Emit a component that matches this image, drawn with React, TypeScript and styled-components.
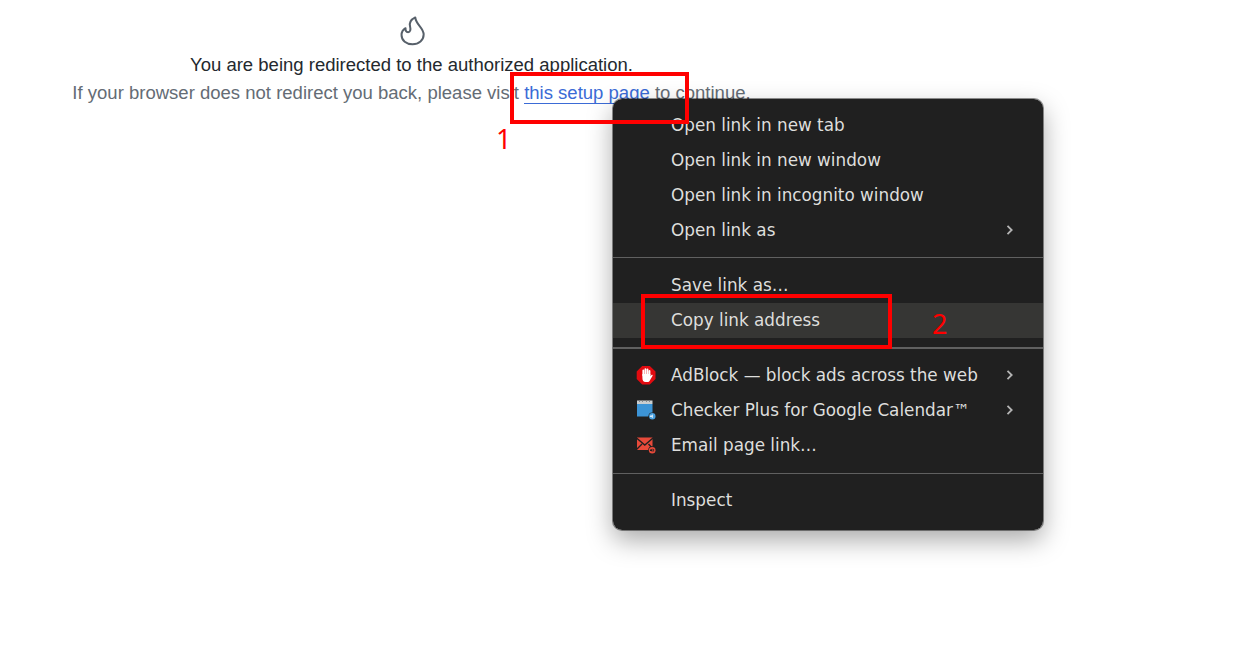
import React from "react";
import styled, { createGlobalStyle } from "styled-components";

const GlobalStyle = createGlobalStyle`
  * { box-sizing: border-box; }
  body { margin: 0; background: #fff; font-family: "Liberation Sans", Arial, sans-serif; overflow: hidden; }
`;

const Page = styled.main`
  position: relative;
  width: 1252px;
  height: 647px;
  overflow: hidden;
`;

const Notice = styled.section`
  width: 823px;
  padding-top: 15px;
  display: flex;
  flex-direction: column;
  align-items: center;
  font-size: 18.53px;
  line-height: 28px;
  white-space: nowrap;
`;

const Flame = styled.svg`
  width: 32px;
  height: 32px;
  margin: 0 0 4px 2px;
`;

const Message = styled.div<{ $muted?: boolean }>`
  color: ${(p) => (p.$muted ? "#646c75" : "#24292e")};
`;

const SetupLink = styled.a`
  color: #3b6bd6;
  text-decoration: none;
  border-bottom: 1px solid #3b6bd6;
`;

const Menu = styled.ul`
  position: absolute;
  left: 613px;
  top: 99px;
  width: 430px;
  height: 431px;
  margin: 0;
  padding: 9px 0 0;
  list-style: none;
  background: #202020;
  border-radius: 9px;
  overflow: hidden;
  font-family: "DejaVu Sans", sans-serif;
  font-size: 16.82px;
  color: #dededc;
`;

const MenuShadow = styled.div`
  position: absolute;
  left: 613px;
  top: 99px;
  width: 430px;
  height: 431px;
  border-radius: 9px;
  box-shadow: 0 0 0 1px rgba(0, 0, 0, 0.42), 0 10px 26px rgba(0, 0, 0, 0.34);
`;

const Item = styled.li<{ $active?: boolean }>`
  height: 35px;
  display: grid;
  grid-template-columns: 34px 1fr 37px;
  align-items: center;
  padding-left: 24px;
  white-space: nowrap;
  background: ${(p) => (p.$active ? "#363634" : "transparent")};
`;

const Label = styled.span`
  grid-column: 2;
  line-height: 20px;
  padding-bottom: 1px;
`;

const Separator = styled.li<{ $thick?: boolean; $drop?: number }>`
  height: 20px;
  padding-top: ${(p) => p.$drop ?? 9}px;
  &::before {
    content: "";
    display: block;
    height: ${(p) => (p.$thick ? 2 : 1)}px;
    background: #606060;
  }
`;

const Glyph = styled.svg`
  width: 20px;
  height: 20px;
  display: block;
  margin: 0 0 1px -1px;
`;

const Chevron = styled.svg`
  width: 8px;
  height: 12px;
  margin-bottom: 2px;
  fill: none;
  stroke: #b4b4b4;
  stroke-width: 1.8;
`;

const Outline = styled.div<{ $x: number; $y: number; $w: number; $h: number }>`
  position: absolute;
  left: ${(p) => p.$x}px;
  top: ${(p) => p.$y}px;
  width: ${(p) => p.$w}px;
  height: ${(p) => p.$h}px;
  border: 4px solid #f00;
`;

const Step = styled.span<{ $x: number; $y: number }>`
  position: absolute;
  left: ${(p) => p.$x}px;
  top: ${(p) => p.$y}px;
  color: #f00;
  font: 27px/32px "Noto Sans", sans-serif;
`;

const StopHand = () => (
  <Glyph viewBox="0 0 20 20">
    <path fill="#e20b10" d="M6.200 1h7.600l5.700 5.500v7.500l-5.700 5.500H6.200L.7 14V6.500z" />
    <path
      d="M7.300 10.500V5.500M9.400 9V4.100M11.500 9V4.300M13.500 10V6"
      stroke="#fff"
      strokeWidth="1.800"
      strokeLinecap="round"
    />
    <path fill="#fff" d="M6.400 9h8v2.200l1.100-1.200c.6-.5 1.400 0 1.100.7l-2.500 4.200c-.7 1.500-1.500 2.200-3.100 2.200H9.600C7.400 17.100 6.400 15.500 6.400 13z" />
  </Glyph>
);

const CalendarIcon = () => (
  <Glyph viewBox="0 0 20 20">
    <path fill="#3c94d6" d="M1 4h15.500v12.500H1z" />
    <path fill="#c9cdcf" d="M1 .5h15.500V4H1z" />
    <path stroke="#888" d="M3.500.5V2M6.500.5V2M10.500.5V2M13.500.5V2" />
    <circle cx="16.300" cy="16.300" r="3.900" fill="#202020" />
    <circle cx="16.300" cy="16.300" r="3.200" fill="#4aa0df" />
    <path fill="#d8ecfa" d="M14 15.500h1.400l1.500-1.200v4l-1.500-1.200H14z" />
  </Glyph>
);

const MailIcon = () => (
  <Glyph viewBox="0 0 20 20">
    <path fill="#e84a3a" d="M1 2.500h15.500v12.500H1z" />
    <path
      fill="none"
      stroke="#202020"
      strokeWidth="1.400"
      d="M.5 3 8.800 10l8.200-7M.5 14.500l5.500-5.500M17 14l-4.500-5"
    />
    <circle cx="16.200" cy="15.200" r="4" fill="#202020" />
    <circle cx="16.200" cy="15.200" r="3.300" fill="#e84a3a" />
    <path fill="#202020" d="M14 14.500h1.200l1.200-1v3.600l-1.200-1H14zM17.300 14h.8v2.500h-.8z" />
  </Glyph>
);

interface EntryProps {
  label: string;
  icon?: React.ReactNode;
  submenu?: boolean;
  active?: boolean;
}

const Entry = ({ label, icon, submenu, active }: EntryProps) => (
  <Item $active={active}>
    {icon}
    <Label>{label}</Label>
    {submenu && (
      <Chevron viewBox="0 0 8 12">
        <path d="M1.500 1.800 5.700 6 1.500 10.200" />
      </Chevron>
    )}
  </Item>
);

export default function App() {
  return (
    <Page>
      <GlobalStyle />
      <Notice>
        <Flame viewBox="0 0 24 24">
          <path
            fill="none"
            stroke="#57606a"
            strokeWidth="1.500"
            strokeLinejoin="round"
            d="M13.700 1.800c-3 1.500-4.600 4-3.900 6.800.6 2.300.2 4.300-1.500 4.300-1.600 0-2-1.300-1.900-3-2 1.200-3 3.200-3 5.100 0 4.200 3.600 7 8.300 7s8.300-3.100 8.300-7.300c0-5.300-5.800-7.200-6.300-12.900z"
          />
        </Flame>
        <Message>You are being redirected to the authorized application.</Message>
        <Message $muted>
          If your browser does not redirect you back, please visit <SetupLink>this setup page</SetupLink> to continue.
        </Message>
      </Notice>
      <MenuShadow />
      <Menu>
        <Entry label="Open link in new tab" />
        <Entry label="Open link in new window" />
        <Entry label="Open link in incognito window" />
        <Entry label="Open link as" submenu />
        <Separator />
        <Entry label="Save link as…" />
        <Entry label="Copy link address" active />
        <Separator $thick />
        <Entry label="AdBlock — block ads across the web" icon={<StopHand />} submenu />
        <Entry label="Checker Plus for Google Calendar™" icon={<CalendarIcon />} submenu />
        <Entry label="Email page link…" icon={<MailIcon />} />
        <Separator $drop={10} />
        <Entry label="Inspect" />
      </Menu>
      <Outline $x={510} $y={72} $w={179} $h={52} />
      <Outline $x={641} $y={294} $w={251} $h={55} />
      <Step $x={496} $y={123}>1</Step>
      <Step $x={932} $y={308}>2</Step>
    </Page>
  );
}
